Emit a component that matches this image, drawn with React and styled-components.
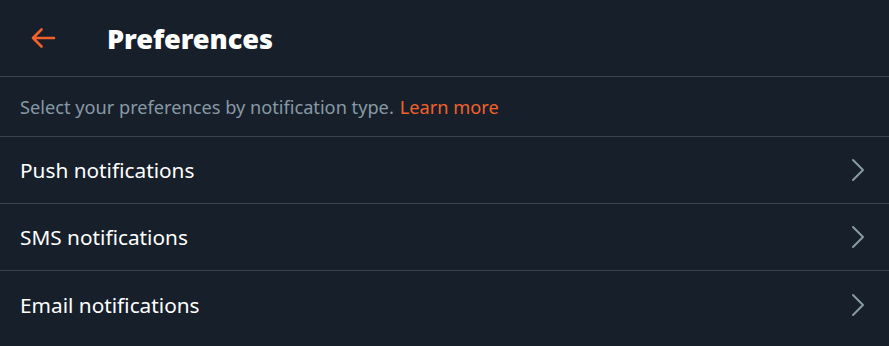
import styled, { createGlobalStyle } from "styled-components";

const Global = createGlobalStyle`
  html, body {
    margin: 0;
    padding: 0;
    background: #17202a;
  }
  body {
    font-family: "Noto Sans", "Open Sans", sans-serif;
  }
`;

const Page = styled.div`
  width: 889px;
  height: 346px;
  background: #17202a;
  color: #fff;
  overflow: hidden;
`;

const Header = styled.header`
  display: flex;
  align-items: center;
  height: 77px;
  padding: 0 20px;
  border-bottom: 1px solid #38444d;
  box-sizing: border-box;
`;

const BackButton = styled.button`
  display: flex;
  align-items: center;
  justify-content: center;
  width: 44px;
  height: 44px;
  margin-left: 1px;
  padding: 0;
  border: 0;
  background: none;
  color: #f4602a;
  cursor: pointer;
`;

const Title = styled.h1`
  margin: 0 0 0 42px;
  font-size: 27.2px;
  font-weight: 900;
  letter-spacing: -0.1px;
`;

const Intro = styled.p`
  margin: 0;
  height: 60px;
  display: flex;
  align-items: center;
  padding: 0 20px;
  box-sizing: border-box;
  border-bottom: 1px solid #38444d;
  font-size: 18.2px;
  color: #8899a6;

  a {
    color: #f4602a;
    text-decoration: none;
    margin-left: 6px;
  }
`;

const Row = styled.a`
  display: flex;
  align-items: center;
  justify-content: space-between;
  height: 67px;
  padding: 0 20px;
  box-sizing: border-box;
  border-bottom: ${(p) => (p.$last ? "none" : "1px solid #38444d")};
  color: #fff;
  font-size: 20.8px;
  text-decoration: none;
`;

const Chevron = styled.svg`
  width: 24px;
  height: 24px;
  margin-right: -1px;
  color: #8899a6;
`;

const rows = ["Push notifications", "SMS notifications", "Email notifications"];

export default function App() {
  return (
    <Page>
      <Global />
      <Header>
        <BackButton aria-label="Back">
          <svg width="26" height="22" viewBox="0 0 26 22" fill="none">
            <path
              d="M24 11H3M11.5 2.5L3 11l8.5 8.5"
              stroke="currentColor"
              strokeWidth="2.6"
              strokeLinecap="round"
              strokeLinejoin="round"
            />
          </svg>
        </BackButton>
        <Title>Preferences</Title>
      </Header>
      <Intro>
        Select your preferences by notification type.
        <a href="#">Learn more</a>
      </Intro>
      {rows.map((r, i) => (
        <Row href="#" key={r} $last={i === rows.length - 1}>
          {r}
          <Chevron viewBox="0 0 24 24" fill="none">
            <path
              d="M7 2l10 10-10 10"
              stroke="currentColor"
              strokeWidth="2"
              strokeLinecap="round"
              strokeLinejoin="round"
            />
          </Chevron>
        </Row>
      ))}
    </Page>
  );
}
